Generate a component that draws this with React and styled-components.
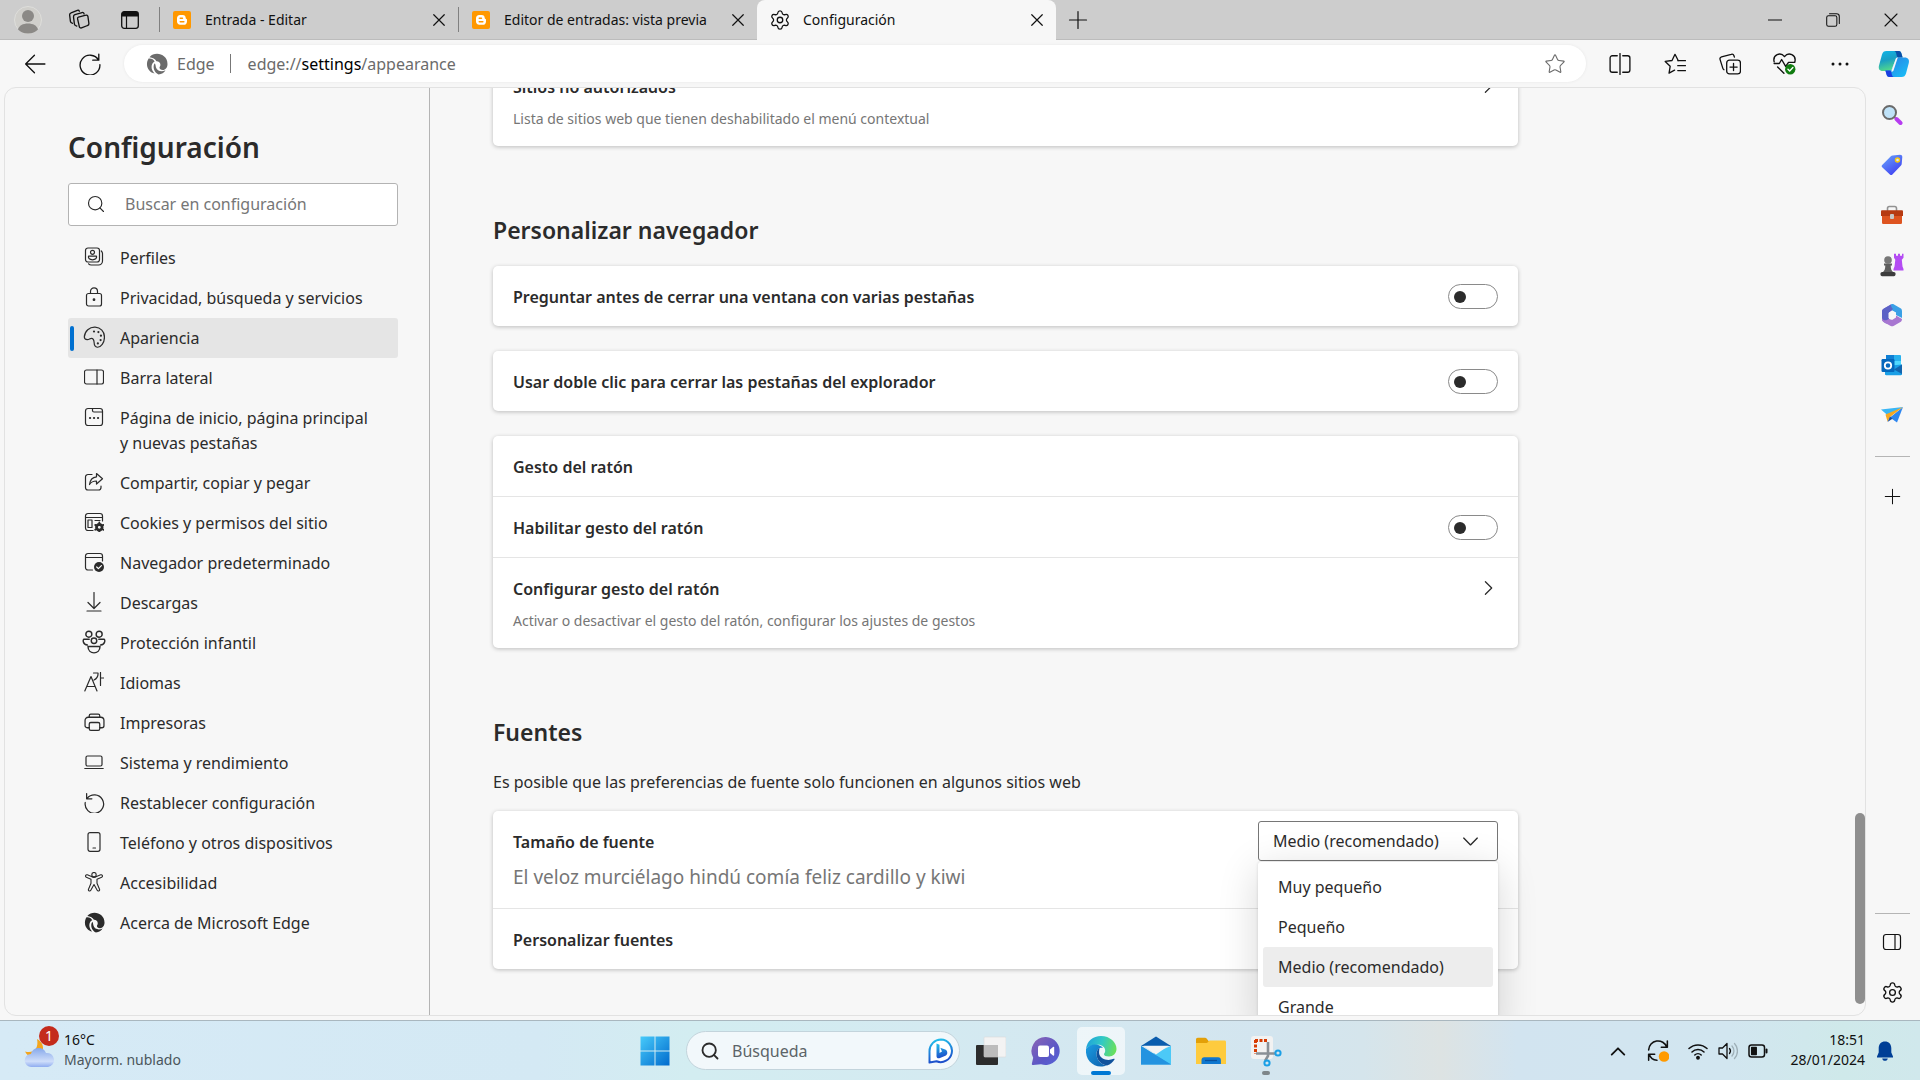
import React, { useState } from 'react';
import styled, { createGlobalStyle } from 'styled-components';
import { Settings, Search, Star } from 'lucide-react';

const GlobalStyle = createGlobalStyle`
    * {
        box-sizing: border-box;
    }
    body {
        margin: 0;
        font-family: "Noto Sans", "Open Sans", sans-serif;
        font-size: 16px;
        color: #2b2b2b;
        background: #f7f7f7;
    }
    button, input, select {
        font: inherit;
        color: inherit;
    }
    button {
        border: 0;
        padding: 0;
        background: none;
    }
    svg {
        display: block;
        flex: none;
    }
`

const Window = styled.div`
    display: flex;
    flex-direction: column;
    height: 100vh;
    overflow: hidden;
`

/* tab strip */
const TabStrip = styled.header`
    display: flex;
    flex: none;
    height: 40px;
    padding-left: 2px;
    background: #cdcdcd;
    box-shadow: inset 0 -1px 0 #bcbcbc;
    color: #111;
`
const StripButton = styled.button`
    display: flex;
    align-items: center;
    justify-content: center;
    width: ${props => props.$width}px;
    height: 39px;
`
const Tabs = styled.div`
    display: flex;
    margin-left: 4px;
`
const Tab = styled.div`
    display: flex;
    align-items: center;
    width: 299px;
    height: 40px;
    padding: 0 12px 1px 0;
    font-size: 14px;
    background: ${props => props.$active ? "#f7f7f7" : "transparent"};
    border-radius: 8px 8px 0 0;
`
const TabLine = styled.span`
    width: 1px;
    height: 25px;
    margin-right: 11px;
    background: ${props => props.$hidden ? "transparent" : "#808080"};
`
const TabIcon = styled.span`
    display: flex;
    justify-content: center;
    width: 22px;
    margin-right: 12px;
`
const TabTitle = styled.span`
    flex: 1;
    white-space: nowrap;
`
const WindowButtons = styled.div`
    display: flex;
    margin-left: auto;
`

/* address bar */
const Toolbar = styled.div`
    display: flex;
    flex: none;
    align-items: center;
    height: 47px;
    padding-left: 7px;
    background: #f7f7f7;
    color: #111;
`
const ToolButton = styled.button`
    display: flex;
    align-items: center;
    justify-content: center;
    width: ${props => props.$last ? 53 : 55}px;
    height: 37px;
`
const AddressBar = styled.div`
    display: flex;
    flex: 1;
    align-items: center;
    height: 37px;
    margin: 0 6px 0 7px;
    padding: 0 20px 0 22px;
    border-radius: 19px;
    background: #fff;
    box-shadow: 0 0 3px #e6e6e6;
    color: #6b6b6b;
`
const SiteName = styled.span`
    margin-left: 9px;
    padding-right: 15px;
`
const AddressLine = styled.span`
    width: 1px;
    height: 19px;
    margin-right: 17px;
    background: #777;
`
const Url = styled.span`
    flex: 1;
    b {
        font-weight: 400;
        color: #000;
    }
`

/* page body */
const Body = styled.div`
    display: flex;
    flex: 1;
    min-height: 0;
    padding-left: 4px;
`
const Frame = styled.div`
    display: flex;
    flex: 1;
    min-width: 0;
    margin-bottom: 4px;
    overflow: hidden;
    border: 1px solid #e2e2e2;
    border-radius: 12px;
`
const Nav = styled.nav`
    flex: none;
    width: 425px;
    padding: 39px 31px 0 63px;
    border-right: 1px solid #b4b4b4;
`
const PageTitle = styled.h1`
    margin: 0 0 16px;
    font-size: 28px;
    line-height: 40px;
    font-weight: 600;
`
const SearchBox = styled.label`
    display: flex;
    align-items: center;
    height: 43px;
    margin-bottom: 12px;
    padding: 0 0 2px 17px;
    border: 1px solid #b3b3b3;
    border-radius: 3px;
    background: #fff;
`
const SearchInput = styled.input`
    flex: 1;
    min-width: 0;
    margin-left: 19px;
    padding: 0;
    border: 0;
    outline: 0;
    background: none;
    &::placeholder {
        color: #767676;
        opacity: 1;
    }
`
const NavList = styled.ul`
    margin: 0;
    padding: 0;
    list-style: none;
`
const NavLink = styled.a`
    display: flex;
    align-items: flex-start;
    min-height: 40px;
    padding: 8px 20px 7px 2px;
    line-height: 25px;
    border-radius: 3px;
    color: inherit;
    text-decoration: none;
    background: ${props => props.$active ? "#e5e5e5" : "transparent"};
`
const NavMark = styled.span`
    flex: none;
    width: 4px;
    height: 25px;
    border-radius: 2px;
    background: ${props => props.$active ? "#0070d0" : "transparent"};
`
const NavIcon = styled.span`
    display: flex;
    flex: none;
    align-items: center;
    justify-content: center;
    width: 24px;
    height: 22px;
    margin: 0 14px 0 8px;
`

const Main = styled.main`
    flex: 1;
    min-width: 0;
    padding-left: 63px;
`
const Content = styled.div`
    max-width: 1025px;
    margin-top: -32px;
`
const SectionTitle = styled.h2`
    margin: 0 0 21px;
    padding-top: 69px;
    font-size: 23px;
    line-height: 30px;
    font-weight: 600;
`
const SectionNote = styled.p`
    margin: 0 0 15px;
    line-height: 28px;
`
const Card = styled.section`
    border-radius: 5px;
    background: #fff;
    box-shadow: 0 1px 4px rgba(0, 0, 0, 0.24);
    & + & {
        margin-top: 25px;
    }
`
const Row = styled.div`
    display: flex;
    justify-content: space-between;
    padding: 0 20px;
    & + & {
        border-top: 1px solid #e5e5e5;
    }
`
const RowText = styled.div`
    padding: 19px 0 17px;
`
const RowTitle = styled.label`
    display: block;
    line-height: 24px;
    font-weight: 600;
`
const RowNote = styled.div`
    margin-top: 10px;
    font-size: 14px;
    line-height: 20px;
    color: #767676;
`
const Sample = styled.div`
    margin-top: 10px;
    font-size: 19px;
    line-height: 27px;
    color: #767676;
`
const Toggle = styled.input`
    appearance: none;
    display: flex;
    align-items: center;
    width: 50px;
    height: 25px;
    margin: 18px 0 0;
    padding-left: 5px;
    border: 1px solid #8a8a8a;
    border-radius: 13px;
    background: #fff;
    &::before {
        content: "";
        width: 12px;
        height: 12px;
        border-radius: 50%;
        background: #2b2b2b;
    }
    &:checked {
        padding-left: 30px;
    }
`
const OpenButton = styled.button`
    display: flex;
    align-items: center;
    justify-content: flex-end;
    width: 20px;
    height: 24px;
    margin-top: 18px;
`
const SelectWrap = styled.div`
    position: relative;
    width: 240px;
    height: 40px;
    margin-top: 10px;
`
const SelectBox = styled.select`
    appearance: none;
    width: 100%;
    height: 40px;
    padding: 0 14px;
    border: 1px solid #767676;
    border-radius: 3px;
    background: #fff;
    outline: 0;
`
const SelectArrow = styled.span`
    position: absolute;
    top: 12px;
    right: 19px;
    pointer-events: none;
`
const Menu = styled.ul`
    position: absolute;
    top: 41px;
    left: 0;
    right: 0;
    z-index: 2;
    margin: 0;
    padding: 5px;
    list-style: none;
    border-radius: 3px;
    background: #fff;
    box-shadow: 0 8px 40px rgba(0, 0, 0, 0.16), 0 0 3px rgba(0, 0, 0, 0.14);
`
const MenuItem = styled.li`
    padding: 0 15px;
    line-height: 40px;
    border-radius: 3px;
    background: ${props => props.$active ? "#ededed" : "transparent"};
`
const ScrollTrack = styled.div`
    display: flex;
    flex: none;
    align-items: flex-end;
    width: 10px;
    padding-bottom: 11px;
`
const ScrollThumb = styled.div`
    width: 10px;
    height: 191px;
    border-radius: 5px;
    background: #8f8f8f;
`

/* right bar */
const SideBar = styled.aside`
    display: flex;
    flex: none;
    flex-direction: column;
    align-items: center;
    width: 54px;
    padding: 3px 2px 3px 0;
    color: #111;
`
const SideButton = styled.button`
    display: flex;
    flex: none;
    align-items: center;
    justify-content: center;
    width: 50px;
    height: 50px;
`
const SideLine = styled.span`
    width: 35px;
    height: 1px;
    margin: ${props => props.$bottom ? "auto 0 3px" : "16px 0 14px"};
    background: #b5b5b5;
`

/* taskbar */
const Taskbar = styled.footer`
    display: grid;
    grid-template-columns: 1fr auto 1fr;
    flex: none;
    align-items: center;
    height: 60px;
    border-top: 1px solid #a9b7bf;
    background: linear-gradient(90deg, #d6eaf6 0%, #d4e9f4 28%, #d3edf1 36%, #d4e9f1 52%, #d3e5ef 66%, #d5e5ec 71%, #dde3e3 75%, #d2e4f0 79%, #d2e6f0 90%, #cfe9ea 96%, #d0e8ec 100%);
    font-size: 14px;
`
const Weather = styled.div`
    display: flex;
    align-items: center;
    padding: 0 0 2px 24px;
    line-height: 20px;
`
const WeatherIcon = styled.span`
    position: relative;
    width: 40px;
`
const Badge = styled.span`
    position: absolute;
    top: -6px;
    left: 15px;
    width: 20px;
    height: 20px;
    border-radius: 50%;
    background: #c42b1c;
    color: #fff;
    text-align: center;
`
const WeatherText = styled.div`
    color: #111;
    div {
        color: #4b565c;
    }
`
const Apps = styled.div`
    display: flex;
    align-items: center;
`
const TaskButton = styled.button`
    position: relative;
    display: flex;
    align-items: center;
    justify-content: center;
    width: 48px;
    height: 48px;
    margin: 0 3px 0 4px;
    border-radius: 5px;
    background: ${props => props.$active ? "rgba(255, 255, 255, 0.6)" : "transparent"};
    &::after {
        content: "";
        position: absolute;
        bottom: 0;
        width: ${props => props.$active ? 20 : 8}px;
        height: 4px;
        border-radius: 2px;
        background: ${props => props.$active ? "#0078d4" : props.$open ? "#7e868a" : "transparent"};
    }
`
const TaskSearch = styled.label`
    display: flex;
    align-items: center;
    width: 274px;
    height: 39px;
    margin: 0 3px 0 4px;
    padding: 0 5px 0 13px;
    border: 1px solid #c3d4dc;
    border-radius: 20px;
    background: #f2f8fb;
    font-size: 16px;
    input {
        flex: 1;
        min-width: 0;
        margin-left: 12px;
        padding: 0;
        border: 0;
        background: none;
    }
    input::placeholder {
        color: #5c6468;
        opacity: 1;
    }
`
const Tray = styled.div`
    display: flex;
    align-items: center;
    justify-content: flex-end;
    padding-right: 15px;
    color: #111;
`
const TrayButton = styled.button`
    display: flex;
    align-items: center;
    justify-content: center;
    width: ${props => props.$wide ? 40 : 30}px;
    height: 40px;
`
const Status = styled.div`
    display: flex;
    margin-left: 5px;
`
const Clock = styled.div`
    min-width: 92px;
    padding-bottom: 2px;
    line-height: 20px;
    text-align: right;
`

/* line drawing on a 20 unit grid */
const Line = ({ size = 20, w = 1.2, color = "currentColor", children }) => (
    <svg width={size} height={size} viewBox="0 0 20 20" fill="none" stroke={color} strokeWidth={w} strokeLinecap="round" strokeLinejoin="round" aria-hidden="true">
        {children}
    </svg>
)

const CloseX = ({ size = 14, w = 1.7 }) => <Line size={size} w={w}><path d="M2.5 2.5l15 15M17.5 2.5l-15 15" /></Line>
const PlusIcon = ({ size = 20 }) => <Line size={size}><path d="M10 1.5v17M1.5 10h17" /></Line>
const ChevronIcon = ({ d = "M6 3l7 7-7 7", size = 20, w = 1.4 }) => <Line size={size} w={w}><path d={d} /></Line>
const PanelIcon = () => <Line><rect x="0.5" y="3" width="19" height="14" rx="2" /><path d="M13 3v14" /></Line>

const EdgeMono = ({ size = 22, bg = "#fff" }) => (
    <svg width={size} height={size} viewBox="0 0 22 22" fill="none" aria-hidden="true">
        <path d="M3.500 4.200C9-2.300 21.500 1 21.500 11c0 3.500-2 6-4.700 6-2 0-3.300-1.200-3.300-2.300 0-.8.900-1.300.9-2.900 0-2.300-1.800-3.700-4-3.600C9.500 6 6.500 4.500 3.500 4.200z" fill="currentColor" />
        <path d="M2.600 5.600c3-.3 5 .9 6 3C5.600 10 4.800 14 6.300 17.300c.6 1.300 1.400 2.300 2.300 3.200C2.700 19.500-1.500 12.500 2.600 5.600z" fill="currentColor" />
        <path d="M8.800 10.300c-2.700 3.300-.6 9.700 3.700 11.100 3.200-.2 5.600-1.800 7-4.200-4 2.300-8.500.7-9.500-2.700-.5-1.500-.3-3-1.200-4.200z" fill="currentColor" />
        <circle cx="11" cy="11" r="1.200" fill={bg} />
    </svg>
)

const Blogger = () => (
    <svg width="18" height="18" viewBox="0 0 18 18" aria-hidden="true">
        <rect width="18" height="18" rx="2" fill="#ff9800" />
        <path d="M7.200 4h2.600c1.800 0 2.900 1.200 2.900 2.800 0 .9.300 1 .8 1.100.4.100.5.400.5.800v1.700c0 2-1.300 3.400-3.200 3.400H7.200C5.300 13.800 4 12.500 4 10.600V7.200C4 5.300 5.300 4 7.200 4z" fill="#fff" />
        <path d="M7.200 7.200h2.300M7.200 10.700h3.700" stroke="#ff9800" strokeWidth="1.400" strokeLinecap="round" />
    </svg>
)

const Avatar = () => (
    <svg width="28" height="28" viewBox="0 0 28 28" aria-hidden="true">
        <circle cx="14" cy="14" r="13.500" fill="#d0cfcb" stroke="#dededb" />
        <circle cx="14" cy="10" r="6" fill="#8b8986" />
        <path d="M4 23.500C5 19.500 9 17.500 14 17.500s9 2 10 6A13.300 13.300 0 0114 27.500 13.300 13.300 0 014 23.500z" fill="#8b8986" />
    </svg>
)

const Workspaces = () => (
    <Line size={22}>
        <path d="M9.500 7.300l6.800-1.700a1.400 1.400 0 011.800 1.100l.9 6.500a1.700 1.700 0 01-1.200 1.800l-5.500 2.200a1.500 1.500 0 01-2-1.200L8.700 9a1.500 1.500 0 01.8-1.700z" />
        <path d="M8 15.500l-1.200-.5a2 2 0 01-1-1.500L5 7.200a2 2 0 011.300-2l6.500-2a1.400 1.400 0 011.800 1.300" />
        <path d="M4 13l-1-.6a2 2 0 01-.8-1.200L1.500 5.500a2 2 0 011.300-2L8.500 1.200a1.400 1.400 0 011.800.8" />
    </Line>
)

const TabActions = () => (
    <svg width="20" height="20" viewBox="0 0 20 20" fill="none" aria-hidden="true">
        <rect x="1.700" y="1.700" width="16.600" height="16.600" rx="2.500" stroke="#111" strokeWidth="1.300" />
        <path d="M1.700 6.500V4a2.300 2.300 0 012.300-2.300h12A2.300 2.300 0 0118.300 4v2.500z" fill="#111" />
        <path d="M6.500 6v12" stroke="#111" strokeWidth="1.200" />
    </svg>
)

const Copilot = () => (
    <svg width="32" height="28" viewBox="0 0 32 28" aria-hidden="true">
        <defs>
            <linearGradient id="cpA" x1="0" y1="0" x2="0.3" y2="1"><stop offset="0" stopColor="#10b5e8" /><stop offset="0.5" stopColor="#1a9fc4" /><stop offset="1" stopColor="#52d98b" /></linearGradient>
            <linearGradient id="cpB" x1="0" y1="0" x2="1" y2="1"><stop offset="0" stopColor="#2b7be4" /><stop offset="1" stopColor="#17c3f7" /></linearGradient>
        </defs>
        <path d="M13 1h7.500c2 0 2.600 1.300 3.100 3l1 3.500h-4c-2 0-2.600 1-3 2.500L13 21H5c-4 0-4.700-2.500-4-5.500L4 4.500C4.800 2 6 1 8.500 1z" fill="url(#cpA)" />
        <path d="M16 1h4.500c2 0 2.600 1.300 3.100 3l1 3.500h-4.300c-2.300 0-1.300-6.500-4.300-6.500z" fill="#0a4fa8" />
        <path d="M19 27h-7.500c-2 0-2.600-1.300-3.100-3l-1-3.500h4c2 0 2.600-1 3-2.500L18.500 7.500h8c4 0 5 2.500 4.300 5.500L28 23.500c-.8 2.500-2 3.500-4.500 3.500z" fill="url(#cpB)" />
        <path d="M16 27h-4.500c-2 0-2.600-1.300-3.100-3l-1-3.500h4.300c2.600 0 1.300 6.500 4.300 6.500z" fill="#1b3fe0" />
        <path d="M17.800 8.500c.5-1 1.200-1 2-1l-4.300 13c-.3 1-1 1-2.300 1z" fill="#f7f7f7" />
    </svg>
)

const Magnifier = () => (
    <svg width="22" height="22" viewBox="0 0 22 22" aria-hidden="true">
        <path d="M13.500 13l2 2" stroke="#8b8b8b" strokeWidth="2" />
        <path d="M15.500 15l4 4" stroke="#b63cf0" strokeWidth="4" strokeLinecap="round" />
        <circle cx="8.500" cy="8.500" r="6.500" fill="#bfe2f8" stroke="#6a6a6a" strokeWidth="2" />
    </svg>
)
const TagIcon = () => (
    <svg width="22" height="22" viewBox="0 0 22 22" aria-hidden="true">
        <defs><linearGradient id="tag" x1="0" y1="0" x2="0.7" y2="1"><stop offset="0" stopColor="#6aa8fb" /><stop offset="1" stopColor="#4040f2" /></linearGradient></defs>
        <path d="M11.500 1.500L19 .8c1.500 0 2.300.8 2.300 2.200l-.6 7c0 .6-.3 1-.7 1.500l-8.600 9c-.8.800-1.700.8-2.500 0L1.200 13.300c-.7-.8-.7-1.600 0-2.400l8.900-8.800c.4-.4.800-.6 1.400-.6z" fill="url(#tag)" />
        <circle cx="16.500" cy="6" r="2" fill="#d7e6ff" stroke="#f9c80e" strokeWidth="1.400" />
    </svg>
)
const Toolbox = () => (
    <svg width="24" height="20" viewBox="0 0 24 20" aria-hidden="true">
        <path d="M7.500 6V3.500c0-1.200.6-2 1.800-2h5.400c1.200 0 1.800.8 1.800 2V6" fill="none" stroke="#929292" strokeWidth="1.600" />
        <path d="M2 9h20v8.500c0 1-.7 1.500-1.500 1.500h-17C2.700 19 2 18.500 2 17.500z" fill="#de5420" />
        <path d="M1 6.500C1 5.700 1.500 5.300 2.200 5.300h19.600c.7 0 1.200.4 1.200 1.200V11H1z" fill="#b63a12" />
        <rect x="10" y="9" width="4" height="5" rx="1" fill="#c7c7c7" />
    </svg>
)
const Chess = () => (
    <svg width="24" height="24" viewBox="0 0 24 24" aria-hidden="true">
        <path d="M14 .8h2v2h2v-2h2v2h2v-2h1.500v4l-1.700 2 .7 6.700 1 2.500v1.500h-10V16l1-2.500.8-6.700-1.300-2z" fill="#b44cf3" />
        <circle cx="8" cy="7" r="3.800" fill="#777" />
        <path d="M4 10.500h8v2h-1.300c0 3 .5 5 2.800 7h-11c2.300-2 2.800-4 2.800-7H4z" fill="#5d5d5d" />
        <rect x=".5" y="19" width="15" height="4.200" rx="1.600" fill="#3c3c3c" />
    </svg>
)
const Office = () => (
    <svg width="22" height="24" viewBox="0 0 22 24" aria-hidden="true">
        <path d="M10 1.500L3 5.500C1.300 6.500 1 7.300 1 9v7c0 1.500.6 2.400 2 3.200l2 1.200c1.800.6 3-.3 3-2V9.500L14 5z" fill="#7465cf" />
        <path d="M10 1.500c1-.6 2-.6 3 0l6.500 3.800C20.700 6 21 7 21 8.500V15l-6-3V9.500L9.500 6.500C8 5 8.500 2.500 10 1.500z" fill="#3aa0e6" />
        <path d="M1 12v4c0 1.500.6 2.400 2 3.200l6.700 3.700c1 .5 1.800.5 2.800 0l6.500-3.600c1.400-.8 2-1.700 2-3.300l-6-3.500-5.500 4z" fill="#a877d1" />
        <path d="M1 9v6c1 3 5 3 7 .5V9.500L12 6c-2-2-2-3-2-4.500L3 5.500C1.300 6.500 1 7.500 1 9z" fill="#5c62c6" />
        <path d="M11 7.800l4 2.200v4.500L11 17l-3.500-2V10z" fill="#f7f7f7" />
    </svg>
)
const Outlook = () => (
    <svg width="22" height="22" viewBox="0 0 22 22" aria-hidden="true">
        <rect x="5" y="1" width="15" height="14" rx="1" fill="#28b1ee" />
        <path d="M5 1h8v7H5z" fill="#0f7fd4" />
        <path d="M13 7h7v7h-7z" fill="#50d9ff" />
        <path d="M4 12l17-1.500V20c0 .8-.4 1.200-1.200 1.200H5.200c-.8 0-1.200-.4-1.200-1.200z" fill="#1a9fe6" />
        <path d="M21 10.500V20l-8-4.500z" fill="#1265ae" />
        <rect x=".5" y="5" width="13" height="13" rx="1.200" fill="#0568bd" />
        <circle cx="7" cy="11.500" r="3.200" fill="none" stroke="#fff" strokeWidth="1.800" />
    </svg>
)
const Plane = () => (
    <svg width="24" height="20" viewBox="0 0 24 20" aria-hidden="true">
        <path d="M1 4.500L23 2 8.500 11z" fill="#39b6f5" />
        <path d="M23 2L17 17.500l-7-5z" fill="#2d86f0" />
        <path d="M23 2L5.500 9.500l2 7L10 12z" fill="#f6a821" />
        <path d="M10 11.500L7.500 17l5-3.300z" fill="#1a4f9e" />
    </svg>
)

const WindowsLogo = () => (
    <svg width="30" height="30" viewBox="0 0 30 30" aria-hidden="true">
        <defs><linearGradient id="win" gradientUnits="userSpaceOnUse" x1="0" y1="0" x2="30" y2="30"><stop offset="0" stopColor="#48ccfb" /><stop offset="1" stopColor="#0069cc" /></linearGradient></defs>
        <path d="M.5.500h14v14H.5zM15.500.500h14v14h-14zM.5 15.500h14v14H.5zM15.500 15.500h14v14h-14z" fill="url(#win)" />
    </svg>
)
const Bing = () => (
    <svg width="26" height="26" viewBox="0 0 26 26" aria-hidden="true">
        <defs><linearGradient id="bing" x1="0" y1="0" x2="0.2" y2="1"><stop offset="0" stopColor="#22c4ec" /><stop offset="1" stopColor="#1d4fcb" /></linearGradient></defs>
        <path d="M13 1.500a11.300 11.300 0 11-4.500 21.800L1.500 24.500V13A11.500 11.500 0 0113 1.500z" fill="#fff" stroke="url(#bing)" strokeWidth="2" strokeLinejoin="round" />
        <path d="M8.500 5.500l3 1.200v8.300l2.500-1.500-1.700-3.800 4.800 1.800c1.500.6 2.200 1.800 2.200 3.200 0 1.300-.7 2.300-1.900 3L12 20c-2 1-3.500-.3-3.500-2z" fill="url(#bing)" />
    </svg>
)
const TaskView = () => (
    <svg width="30" height="30" viewBox="0 0 30 30" aria-hidden="true">
        <rect x="0" y="9" width="22" height="20" rx="1" fill="#2c2c2c" />
        <rect x="8" y="1" width="22" height="20" rx="1" fill="#f3f3f3" stroke="#dadada" strokeWidth=".6" />
        <path d="M8 9h14v12H8z" fill="#bcbcbc" />
    </svg>
)
const Chat = () => (
    <svg width="30" height="30" viewBox="0 0 30 30" aria-hidden="true">
        <defs><linearGradient id="chat" x1="0" y1="0" x2="1" y2="1"><stop offset="0" stopColor="#8d65b4" /><stop offset="0.600" stopColor="#5b57c6" /><stop offset="1" stopColor="#5563d8" /></linearGradient></defs>
        <path d="M15 1a14 14 0 11-5 27.200L2.200 29c-1 .1-1.600-.5-1.300-1.500l1.300-5.800A14 14 0 0115 1z" fill="url(#chat)" />
        <rect x="7" y="9.500" width="11" height="11.500" rx="2" fill="#fff" />
        <path d="M19 13.500l3-2.600c.6-.5 1.200-.2 1.200.5v7.700c0 .7-.6 1-1.200.5l-3-2.600z" fill="#fff" />
    </svg>
)
const EdgeColor = () => (
    <svg width="32" height="32" viewBox="0 0 32 32" aria-hidden="true">
        <defs>
            <linearGradient id="edgeTop" x1="0" y1="0.300" x2="1" y2="0.500"><stop offset="0" stopColor="#1fa2dc" /><stop offset="0.500" stopColor="#31c9c5" /><stop offset="1" stopColor="#69e05c" /></linearGradient>
            <linearGradient id="edgeLow" x1="0" y1="0" x2="1" y2="1"><stop offset="0" stopColor="#1b9de2" /><stop offset="1" stopColor="#0d60ad" /></linearGradient>
        </defs>
        <path d="M1 14C2 6 8 1 16 1c9 0 15.500 6.500 15.500 13 0 4.500-3.500 7.500-7.500 7.500-3 0-5-1-5-2.300 0-1 1.200-1.500 1.200-3.500 0-3.500-3.200-6-7.200-6C8 9.700 3.500 11 1 14z" fill="url(#edgeTop)" />
        <path d="M1 14c2.500-3.500 7-5.300 11.500-4.300 3 .7 4.500 2 5.500 3.300-3.500-1-6.500 1.500-6.500 6 0 5.500 4 10.500 10 11.500-2 .7-3.500 1-5.500 1C7 31.500 0 24 1 14z" fill="url(#edgeLow)" />
        <path d="M14.500 13c-2 1-3 3.500-3 6 0 6 5 11 10.500 11.500 3.500-1 6-3.500 7.500-6 .4-.8-.2-1-.8-.7-6 2.700-13.700.2-14.500-5-.3-2.300.1-4.200.3-5.800z" fill="#11529c" />
    </svg>
)
const Mail = () => (
    <svg width="30" height="30" viewBox="0 0 30 30" aria-hidden="true">
        <path d="M0 10L15 .500 30 10z" fill="#0b5cad" />
        <path d="M0 10l15 9.500L30 10v18.500H0z" fill="#28a8ea" />
        <path d="M30 10v18.500L12 17.500z" fill="#4cc9f7" />
        <path d="M0 10v18.500h30L13 18z" fill="#2493e0" />
        <path d="M2.500 9.700h25L15 18.500z" fill="#f4f4f4" />
    </svg>
)
const Folder = () => (
    <svg width="30" height="28" viewBox="0 0 30 28" aria-hidden="true">
        <path d="M0 2.500C0 1.500.7.800 1.700.800H9c.7 0 1.200.2 1.600.8L13 4.500v4H0z" fill="#e3a008" />
        <path d="M0 6h11l2.500-2.500h15c1 0 1.500.6 1.500 1.500v22H0z" fill="#fecb3e" />
        <path d="M5.500 27v-4c0-1.700 1-2.800 2.700-2.800h14c1.700 0 2.700 1.100 2.700 2.800v4z" fill="#0f77cf" />
        <path d="M9 23.500h12" stroke="#0a509b" strokeWidth="1.300" />
    </svg>
)
const Snip = () => (
    <svg width="32" height="32" viewBox="0 0 32 32" fill="none" aria-hidden="true">
        <rect x="1" y="1" width="22" height="23" rx="3" fill="#f2f2f2" />
        <path d="M5 5.500h12M5.500 5v14" stroke="#d83b01" strokeWidth="3" strokeDasharray="3 1.500" />
        <path d="M18 7v14l-3 5M6 18.500h19" stroke="#8a9096" strokeWidth="2.600" />
        <circle cx="28" cy="18" r="2.600" stroke="#1a9fe6" strokeWidth="2" />
        <circle cx="17" cy="28" r="2.600" stroke="#1a9fe6" strokeWidth="2" />
    </svg>
)
const Cloud = () => (
    <svg width="32" height="36" viewBox="0 0 32 36" aria-hidden="true">
        <defs><linearGradient id="cloud" x1="0" y1="0" x2="0" y2="1"><stop offset="0" stopColor="#86a8ea" /><stop offset="0.700" stopColor="#cfdefa" /><stop offset="1" stopColor="#8facf0" /></linearGradient></defs>
        <path d="M13 7c2 9-3 15-12 12.500C4 26 12 27 17 22c4-5 2-12-4-15z" fill="#f4a51c" />
        <path d="M7.500 35a6.500 6.500 0 01-.6-13A8 8 0 0122 21a7 7 0 012 14z" fill="url(#cloud)" />
    </svg>
)

const navItems = [
    ["Perfiles", <Line><rect x="1.500" y="1" width="14" height="14" rx="2.500" /><circle cx="8.500" cy="5.300" r="2" /><path d="M4.500 9.200h8c.6 2.200-1.300 3.600-4 3.600s-4.600-1.400-4-3.600z" /><path d="M17.300 4c.7.700 1.200 1.500 1.200 2.600V14a4 4 0 01-4 4H7.200c-1 0-2-.5-2.600-1.200" /></Line>],
    ["Privacidad, búsqueda y servicios", <Line><rect x="2.500" y="6.500" width="15" height="12.500" rx="2" /><path d="M6.500 6.500V4.300a3.500 3.500 0 017 0v2.200" /><circle cx="10" cy="12.700" r=".8" fill="currentColor" /></Line>],
    ["Apariencia", <Line size={22} w={1.100}><path d="M1.200 10C1.500 4.500 6 .800 11 1c5 .2 8.500 4 8.500 9 0 5.500-3.200 9.500-6.500 9.300-2.200-.2-2.800-2-2.900-4.300-.1-2.500-1-4-2.700-3.800-1.200.1-2 1.300-3.500 1.200-1.500-.1-2.700-1-2.700-2.400z" /><path d="M10 5h.01M14 5.500h.01M16.300 8.800h.01M16 12.800h.01M13.500 15.800h.01" strokeWidth="2" /></Line>],
    ["Barra lateral", <PanelIcon />],
    ["Página de inicio, página principal y nuevas pestañas", <Line><rect x="1.500" y="1.500" width="17" height="17" rx="2.500" /><path d="M8.500 1.500v2c0 1 .5 1.500 1.500 1.500h8.500" /><path d="M6 11h.1M10 11h.1M14 11h.1" strokeWidth="2.200" /></Line>],
    ["Compartir, copiar y pegar", <Line><path d="M8 2.500H4A2.500 2.500 0 001.500 5v10.500A2.500 2.500 0 004 18h10.500a2.500 2.500 0 002.500-2.500V14" /><path d="M12.500 1.500l6 5.300-6 5.200V9c-3.500 0-5.500 1-7 3.500.5-4 2.500-7.300 7-7.700z" /></Line>],
    ["Cookies y permisos del sitio", <Line><path d="M9 18.500H4A2.500 2.500 0 011.500 16V4A2.500 2.500 0 014 1.500h12A2.500 2.500 0 0118.500 4v5M1.500 5.500h17" /><rect x="4" y="8" width="4" height="7.500" /><path d="M11 8.500h5" /><circle cx="15.300" cy="15.300" r="2.700" strokeWidth="3" /><path d="M15.300 10.500v9.600M11.200 12.900l8.200 4.800M19.400 12.900l-8.200 4.800" strokeWidth="1.800" /><circle cx="15.300" cy="15.300" r=".8" fill="#f7f7f7" stroke="#f7f7f7" /></Line>],
    ["Navegador predeterminado", <Line><path d="M8.500 18H4a2.500 2.500 0 01-2.500-2.500V4A2.500 2.500 0 014 1.500h12A2.500 2.500 0 0118.500 4v5M1.500 5.500h17" /><circle cx="15" cy="15" r="5" fill="currentColor" stroke="none" /><path d="M12.700 15l1.700 1.700 3-3" stroke="#fff" /></Line>],
    ["Descargas", <Line><path d="M10 .500v15M4 10.500l6 6 6-6M3 19h14" /></Line>],
    ["Protección infantil", <Line size={24}><circle cx="5.700" cy="3.500" r="2.500" /><circle cx="14.300" cy="3.500" r="2.500" /><circle cx="10" cy="9" r="2.300" /><path d="M6 7.700H1.700c-1.200 0-1.200 4.600 2.800 4.800M14 7.700h4.300c1.200 0 1.200 4.600-2.800 4.800M5 13.800h10c0 7-10 7-10 0z" /></Line>],
    ["Idiomas", <Line><path d="M.800 19L7 4.500 13 19M2.800 14.500h8.300M9.500 1H14c.3 3-1 5.500-4 7M16.500 .500v13M16.500 6h3" /></Line>],
    ["Impresoras", <Line size={21}><path d="M5 15H3a2 2 0 01-2-2V8a3 3 0 013-3h12a3 3 0 013 3v5a2 2 0 01-2 2h-2" /><path d="M5 5V3.500C5 2.500 5.500 2 6.500 2h7c1 0 1.500.5 1.500 1.500V5" /><rect x="5" y="10" width="10" height="7.500" rx="1.500" /></Line>],
    ["Sistema y rendimiento", <Line><rect x="2" y="4" width="16" height="10" rx="1.500" /><path d="M.800 16.500h18.400" /></Line>],
    ["Restablecer configuración", <Line size={21}><path d="M2.500 1.500v5h5M3 6A8.800 8.800 0 111.200 10" /></Line>],
    ["Teléfono y otros dispositivos", <Line><rect x="4" y=".700" width="12" height="18.600" rx="2" /><path d="M9 16h2.500" /></Line>],
    ["Accesibilidad", <Line w={1.100}><circle cx="10" cy="2.700" r="2.200" /><path d="M7.500 4.500L3.300 2.800c-1.500-.5-2.500 1.700-1 2.400L7 7.300v4l-2.500 6c-.6 1.600 1.500 2.400 2.300 1L10 12.500l3.200 5.800c.8 1.400 2.900.6 2.300-1l-2.500-6v-4l4.700-2.100c1.500-.7.500-2.900-1-2.400l-4.200 1.700c-1.500 1-3.500 1-5 0z" /></Line>],
    ["Acerca de Microsoft Edge", <EdgeMono size={21} bg="#f7f7f7" />],
]

const sizes = ["Muy pequeño", "Pequeño", "Medio (recomendado)", "Grande"]

const sideApps = [
    ["Buscar", <Magnifier />],
    ["Compras", <TagIcon />],
    ["Herramientas", <Toolbox />],
    ["Juegos", <Chess />],
    ["Microsoft 365", <Office />],
    ["Outlook", <Outlook />],
    ["Drop", <Plane />],
]

function ToggleRow({ id, title }) {
    const [on, setOn] = useState(false)
    return (
        <Row>
            <RowText><RowTitle htmlFor={id}>{title}</RowTitle></RowText>
            <Toggle id={id} type="checkbox" role="switch" checked={on} onChange={() => setOn(!on)} />
        </Row>
    )
}

function LinkRow({ title, note }) {
    return (
        <Row>
            <RowText>
                <RowTitle as="div">{title}</RowTitle>
                <RowNote>{note}</RowNote>
            </RowText>
            <OpenButton aria-label={title}><ChevronIcon size={18} /></OpenButton>
        </Row>
    )
}

function App() {
    const [fontSize, setFontSize] = useState("Medio (recomendado)")

    return (
        <Window>
            <GlobalStyle />
            <TabStrip>
                <StripButton $width={51} aria-label="Perfil"><Avatar /></StripButton>
                <StripButton $width={51} aria-label="Áreas de trabajo"><Workspaces /></StripButton>
                <StripButton $width={51} aria-label="Acciones de pestaña"><TabActions /></StripButton>
                <Tabs>
                    <Tab>
                        <TabLine />
                        <TabIcon><Blogger /></TabIcon>
                        <TabTitle>Entrada - Editar</TabTitle>
                        <button aria-label="Cerrar pestaña"><CloseX /></button>
                    </Tab>
                    <Tab>
                        <TabLine />
                        <TabIcon><Blogger /></TabIcon>
                        <TabTitle>Editor de entradas: vista previa</TabTitle>
                        <button aria-label="Cerrar pestaña"><CloseX /></button>
                    </Tab>
                    <Tab $active>
                        <TabLine $hidden />
                        <TabIcon><Settings size={22} strokeWidth={1.4} /></TabIcon>
                        <TabTitle>Configuración</TabTitle>
                        <button aria-label="Cerrar pestaña"><CloseX /></button>
                    </Tab>
                </Tabs>
                <StripButton $width={44} aria-label="Nueva pestaña"><PlusIcon /></StripButton>
                <WindowButtons>
                    <StripButton $width={58} aria-label="Minimizar"><Line size={14} w={1.500}><path d="M.500 10h19" /></Line></StripButton>
                    <StripButton $width={58} aria-label="Restaurar"><Line size={14} w={1.500}><rect x="1" y="4" width="14.500" height="15" rx="2.500" /><path d="M5 1h10a4 4 0 014 4v10" /></Line></StripButton>
                    <StripButton $width={58} aria-label="Cerrar"><CloseX size={16} w={1.400} /></StripButton>
                </WindowButtons>
            </TabStrip>

            <Toolbar>
                <ToolButton aria-label="Atrás"><Line size={22}><path d="M19 10H1.500M9.500 2L1.500 10l8 8" /></Line></ToolButton>
                <ToolButton aria-label="Actualizar"><Line size={22}><path d="M17.800 6.500A9 9 0 1019 10.500M18 1v5.500h-5.500" /></Line></ToolButton>
                <AddressBar>
                    <EdgeMono />
                    <SiteName>Edge</SiteName>
                    <AddressLine />
                    <Url>edge://<b>settings</b>/appearance</Url>
                    <button aria-label="Agregar a favoritos"><Star size={22} strokeWidth={1.200} /></button>
                </AddressBar>
                <ToolButton aria-label="Pantalla dividida"><Line size={22}><path d="M10 .500v19M7.500 2.500H3A2 2 0 001 4.500v11a2 2 0 002 2h4.500M12.500 2.500H17a2 2 0 012 2v11a2 2 0 01-2 2h-4.500" /></Line></ToolButton>
                <ToolButton aria-label="Favoritos"><Line size={22}><path d="M13 7L10 1.200 7.300 6.800l-6.200.900 4.500 4.400-1 6.200 5-2.700M12.500 7h7M12.500 11.500h7M12.500 16h7" /></Line></ToolButton>
                <ToolButton aria-label="Colecciones"><Line size={22}><rect x="7" y="6.500" width="12.500" height="12.500" rx="2.500" /><path d="M13.200 9.500v6.500M10 12.800h6.500M14 3.800l-.4-1.300a2 2 0 00-2.500-1.300L2.300 3.500A2 2 0 001 6l2.500 8c.2.600.6 1 1 1.200" /></Line></ToolButton>
                <ToolButton aria-label="Rendimiento">
                    <Line size={23}>
                        <path d="M1 8.500C-.5 2.500 6.500-.500 10 4c3.500-4.500 10.500-1.500 9 4.500M1 10h4.500l2-3.500 3.500 6 2.500-3.500H19M4 13l5.500 5.500" />
                        <circle cx="15" cy="15" r="4.500" fill="#107c10" stroke="none" />
                        <path d="M13 15l1.500 1.500 2.800-3" stroke="#fff" />
                    </Line>
                </ToolButton>
                <ToolButton aria-label="Más"><Line size={20} w={3}><path d="M3 10h.01M10 10h.01M17 10h.01" /></Line></ToolButton>
                <ToolButton $last aria-label="Copilot"><Copilot /></ToolButton>
            </Toolbar>

            <Body>
                <Frame>
                    <Nav>
                        <PageTitle>Configuración</PageTitle>
                        <SearchBox>
                            <Search size={20} strokeWidth={1.400} />
                            <SearchInput placeholder="Buscar en configuración" aria-label="Buscar en configuración" />
                        </SearchBox>
                        <NavList>
                            {navItems.map(([label, icon], index) => (
                                <li key={label}>
                                    <NavLink href="#" $active={index === 2}>
                                        <NavMark $active={index === 2} />
                                        <NavIcon>{icon}</NavIcon>
                                        <span>{label}</span>
                                    </NavLink>
                                </li>
                            ))}
                        </NavList>
                    </Nav>
                    <Main>
                        <Content>
                            <Card>
                                <LinkRow title="Sitios no autorizados" note="Lista de sitios web que tienen deshabilitado el menú contextual" />
                            </Card>

                            <SectionTitle>Personalizar navegador</SectionTitle>
                            <Card>
                                <ToggleRow id="ask" title="Preguntar antes de cerrar una ventana con varias pestañas" />
                            </Card>
                            <Card>
                                <ToggleRow id="double" title="Usar doble clic para cerrar las pestañas del explorador" />
                            </Card>
                            <Card>
                                <Row>
                                    <RowText><RowTitle as="div">Gesto del ratón</RowTitle></RowText>
                                </Row>
                                <ToggleRow id="gesture" title="Habilitar gesto del ratón" />
                                <LinkRow title="Configurar gesto del ratón" note="Activar o desactivar el gesto del ratón, configurar los ajustes de gestos" />
                            </Card>

                            <SectionTitle>Fuentes</SectionTitle>
                            <SectionNote>Es posible que las preferencias de fuente solo funcionen en algunos sitios web</SectionNote>
                            <Card>
                                <Row>
                                    <RowText>
                                        <RowTitle htmlFor="size">Tamaño de fuente</RowTitle>
                                        <Sample>El veloz murciélago hindú comía feliz cardillo y kiwi</Sample>
                                    </RowText>
                                    <SelectWrap>
                                        <SelectBox id="size" value={fontSize} onChange={e => setFontSize(e.target.value)}>
                                            {sizes.map(size => <option key={size}>{size}</option>)}
                                        </SelectBox>
                                        <SelectArrow><ChevronIcon d="M2 6l8 8 8-8" size={17} w={1.600} /></SelectArrow>
                                        <Menu role="listbox" aria-label="Tamaño de fuente">
                                            {sizes.map(size => (
                                                <MenuItem key={size} role="option" aria-selected={size === fontSize} $active={size === fontSize} onClick={() => setFontSize(size)}>
                                                    {size}
                                                </MenuItem>
                                            ))}
                                        </Menu>
                                    </SelectWrap>
                                </Row>
                                <Row>
                                    <RowText><RowTitle as="div">Personalizar fuentes</RowTitle></RowText>
                                </Row>
                            </Card>
                        </Content>
                    </Main>
                    <ScrollTrack><ScrollThumb /></ScrollTrack>
                </Frame>
                <SideBar>
                    {sideApps.map(([label, icon]) => (
                        <SideButton key={label} aria-label={label}>{icon}</SideButton>
                    ))}
                    <SideLine />
                    <SideButton aria-label="Personalizar"><PlusIcon size={17} /></SideButton>
                    <SideLine $bottom />
                    <SideButton aria-label="Ocultar barra lateral"><Line><rect x="1.500" y="2.500" width="17" height="15" rx="2.500" /><path d="M13 2.500v15" /></Line></SideButton>
                    <SideButton aria-label="Configuración"><Settings size={23} strokeWidth={1.400} /></SideButton>
                </SideBar>
            </Body>

            <Taskbar>
                <Weather>
                    <WeatherIcon><Cloud /><Badge>1</Badge></WeatherIcon>
                    <WeatherText>16°C<div>Mayorm. nublado</div></WeatherText>
                </Weather>
                <Apps>
                    <TaskButton aria-label="Inicio"><WindowsLogo /></TaskButton>
                    <TaskSearch>
                        <Search size={20} strokeWidth={2.200} />
                        <input placeholder="Búsqueda" aria-label="Búsqueda" />
                        <Bing />
                    </TaskSearch>
                    <TaskButton aria-label="Vista de tareas"><TaskView /></TaskButton>
                    <TaskButton aria-label="Chat"><Chat /></TaskButton>
                    <TaskButton $active aria-label="Microsoft Edge"><EdgeColor /></TaskButton>
                    <TaskButton aria-label="Correo"><Mail /></TaskButton>
                    <TaskButton aria-label="Explorador de archivos"><Folder /></TaskButton>
                    <TaskButton $open aria-label="Recortes"><Snip /></TaskButton>
                </Apps>
                <Tray>
                    <TrayButton $wide aria-label="Iconos ocultos"><ChevronIcon d="M3 14l7-7 7 7" size={18} w={2} /></TrayButton>
                    <TrayButton $wide aria-label="Actualizaciones">
                        <Line size={22} w={1.400}>
                            <path d="M1.500 9A8.500 8.500 0 0118 6.500M18.500 1v5.500H13M9 18.500a8 8 0 01-7-5.500M1.500 18.500v-5.500H7" />
                            <circle cx="15.500" cy="15" r="4.800" fill="#ff9a00" stroke="none" />
                        </Line>
                    </TrayButton>
                    <Status>
                        <TrayButton aria-label="Red">
                            <Line w={1.500}>
                                <path d="M1 7.500a13 13 0 0118 0M4 11a8.500 8.500 0 0112 0M6.800 14a4.600 4.600 0 016.400 0" />
                                <circle cx="10" cy="16.800" r="1.200" fill="currentColor" />
                            </Line>
                        </TrayButton>
                        <TrayButton aria-label="Volumen">
                            <Line w={1.300}>
                                <path d="M1 7v6h3.500L9 17.500v-15L4.500 7z" />
                                <path d="M11.500 7.500a4 4 0 010 5" />
                                <path d="M14 5a7.500 7.500 0 010 10M16.500 2.500a11 11 0 010 15" stroke="#9fb0b8" />
                            </Line>
                        </TrayButton>
                        <TrayButton aria-label="Batería">
                            <Line w={1.500}>
                                <rect x="1" y="4" width="15.500" height="12" rx="2.500" />
                                <path d="M3.700 6.500h4.500v7H3.700z" fill="currentColor" />
                                <path d="M18.500 8.500v3" strokeWidth="2" />
                            </Line>
                        </TrayButton>
                    </Status>
                    <Clock>18:51<br />28/01/2024</Clock>
                    <TrayButton $wide aria-label="Notificaciones">
                        <svg width="20" height="20" viewBox="0 0 20 20" aria-hidden="true">
                            <path d="M10 .500c3.800 0 6.300 2.700 6.300 6.500v4.500l1.700 4v1H2v-1l1.700-4V7C3.700 3.200 6.200.500 10 .500zM7.200 17.500h5.600c-.3 1.500-1.300 2.300-2.800 2.300s-2.500-.8-2.800-2.300z" fill="#003f96" />
                        </svg>
                    </TrayButton>
                </Tray>
            </Taskbar>
        </Window>
    )
}

export default App
